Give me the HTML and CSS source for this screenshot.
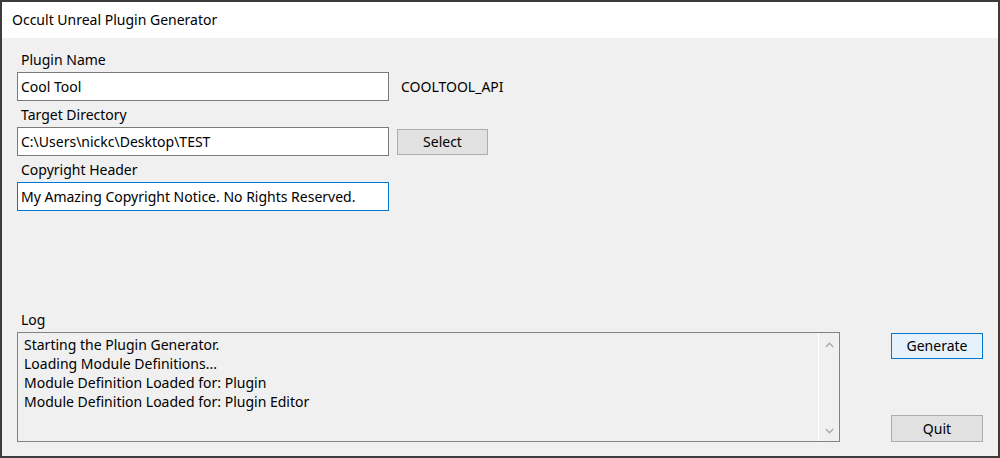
FILE: index.html
```html
<!DOCTYPE html>
<html>
<head>
<meta charset="utf-8">
<link rel="stylesheet" href="styles.css">
</head>
<body>
<div class="window">
  <div class="titlebar">Occult Unreal Plugin Generator</div>
  <div class="content">
    <div class="fields">
      <div class="label">Plugin Name</div>
      <div class="row">
        <div class="input">Cool Tool</div>
        <div class="side-text">COOLTOOL_API</div>
      </div>
      <div class="label">Target Directory</div>
      <div class="row">
        <div class="input">C:\Users\nickc\Desktop\TEST</div>
        <div class="btn select-btn">Select</div>
      </div>
      <div class="label">Copyright Header</div>
      <div class="row">
        <div class="input focused">My Amazing Copyright Notice. No Rights Reserved.</div>
      </div>
    </div>
    <div class="log-area">
      <div class="label log-label">Log</div>
      <div class="log-box">
        <div class="log-text">
          <div>Starting the Plugin Generator.</div>
          <div>Loading Module Definitions...</div>
          <div>Module Definition Loaded for: Plugin</div>
          <div>Module Definition Loaded for: Plugin Editor</div>
        </div>
        <div class="scrollbar">
          <svg class="chev" width="9" height="6" viewBox="0 0 9 6"><path d="M0.8 5 L4.5 1.2 L8.2 5" fill="none" stroke="#a8a8a8" stroke-width="1.3"/></svg>
          <svg class="chev" width="9" height="6" viewBox="0 0 9 6"><path d="M0.8 1 L4.5 4.8 L8.2 1" fill="none" stroke="#a8a8a8" stroke-width="1.3"/></svg>
        </div>
      </div>
      <div class="buttons">
        <div class="btn default-btn">Generate</div>
        <div class="btn">Quit</div>
      </div>
    </div>
  </div>
</div>
</body>
</html>
```
FILE: styles.css
```css
html, body {
  margin: 0;
  padding: 0;
  background: #f0f0f0;
}
body {
  font-family: "Noto Sans", "Open Sans", sans-serif;
  font-size: 14px;
  color: #000;
}
.window {
  width: 1000px;
  height: 458px;
  box-sizing: border-box;
  border: 2px solid #3c3c3c;
  display: flex;
  flex-direction: column;
  background: #f0f0f0;
}
.titlebar {
  height: 36px;
  background: #fff;
  line-height: 36px;
  padding-left: 10px;
  font-size: 14px;
}
.content {
  flex: 1;
  display: flex;
  flex-direction: column;
  padding: 11px 15px 14px 15px;
}
.fields {
  display: flex;
  flex-direction: column;
}
.label {
  height: 22px;
  line-height: 22px;
  padding-left: 4px;
  margin-bottom: 1px;
}
.row {
  display: flex;
  align-items: center;
  margin-bottom: 3px;
}
.input {
  width: 372px;
  height: 29px;
  box-sizing: border-box;
  border: 1px solid #7a7a7a;
  background: #fff;
  padding-left: 3px;
  line-height: 27px;
  white-space: nowrap;
}
.input.focused {
  border-color: #0078d7;
}
.side-text {
  margin-left: 12px;
}
.btn {
  width: 92px;
  height: 27px;
  box-sizing: border-box;
  border: 1px solid #adadad;
  background: #e1e1e1;
  text-align: center;
  line-height: 25px;
}
.select-btn {
  margin-left: 8px;
  width: 91px;
  height: 26px;
  line-height: 24px;
  margin-top: 1px;
}
.default-btn {
  background: #e5f1fb;
  border-color: #0078d7;
  height: 26px;
  line-height: 24px;
}
.log-area {
  margin-top: auto;
  display: grid;
  grid-template-columns: 823px 1fr;
  grid-template-rows: 22px 110px;
  row-gap: 1px;
}
.log-label {
  grid-column: 1;
  grid-row: 1;
  margin-bottom: 0;
}
.log-box {
  grid-column: 1;
  grid-row: 2;
  box-sizing: border-box;
  border: 1px solid #828282;
  display: flex;
  background: #f0f0f0;
}
.log-text {
  flex: 1;
  padding: 2px 0 0 6px;
  line-height: 19px;
}
.scrollbar {
  width: 20px;
  border-left: 1px solid #ffffff;
  display: flex;
  flex-direction: column;
  justify-content: space-between;
  align-items: center;
  padding: 9px 0 7px 0;
}
.chev {
  display: block;
}
.buttons {
  grid-column: 2;
  grid-row: 2;
  justify-self: end;
  display: flex;
  flex-direction: column;
  justify-content: space-between;
  padding-top: 1px;
}
```
